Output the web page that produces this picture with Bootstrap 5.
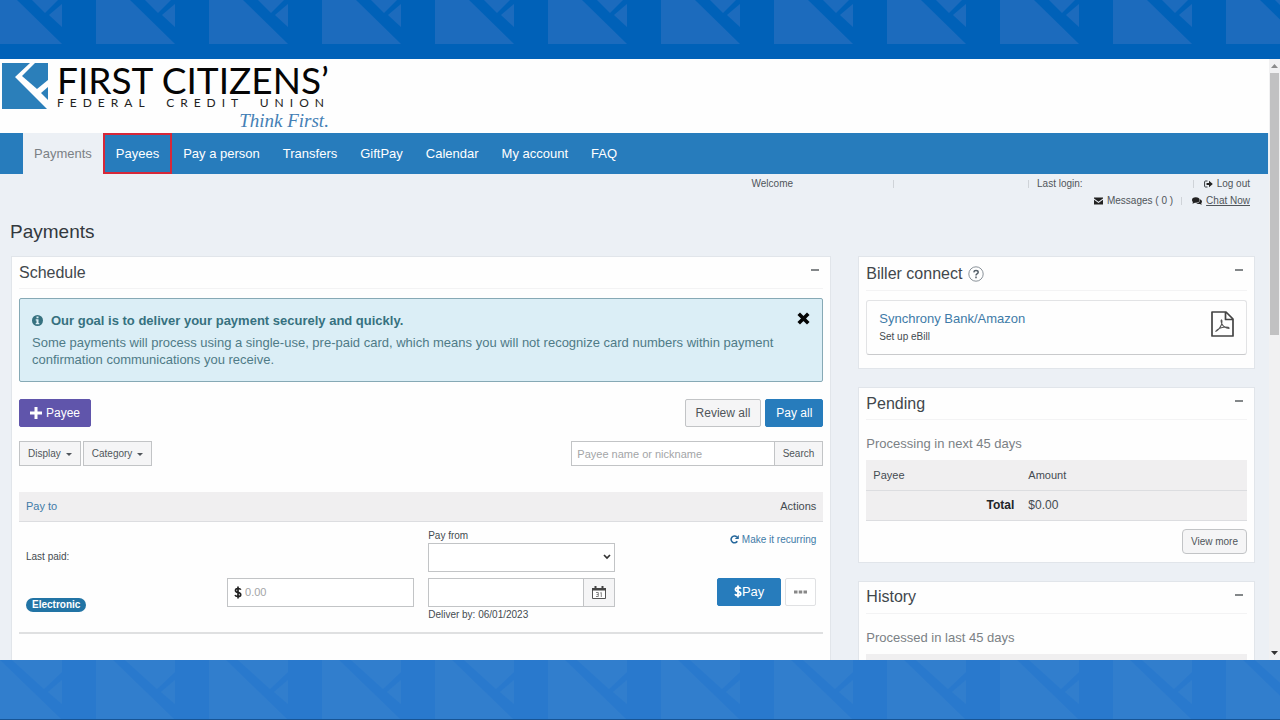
<!DOCTYPE html>
<html lang="en">
<head>
<meta charset="utf-8">
<meta name="viewport" content="width=device-width, initial-scale=1">
<title>Payments - First Citizens' Federal Credit Union</title>
<link href="https://cdn.jsdelivr.net/npm/bootstrap@5.3.0/dist/css/bootstrap.min.css" rel="stylesheet">
<style>
:root{--brand:#277cbc;--ink:#444b50;--line:#c2c4c6;--soft:#f0eff0}
body{font-family:"Liberation Sans",Arial,sans-serif;font-size:11px;line-height:14px;color:var(--ink);background:#0061b8}
a{text-decoration:none;color:#3f7ba8}
svg{display:block;flex:none}
.band-top{height:59px;background:#0061b8}
.band-bottom{height:60px;background:#2979cd;border-bottom:1px solid #175494}
.screen{background:#ecf0f5;min-height:0}
.masthead{background:#fefefe;height:74px;padding:4px 2px 0}
.brand-name{font:37px/34px Lato,sans-serif;color:#050505}
.brand-sub{font:12px/12px Lato,sans-serif;letter-spacing:6px;color:#222;margin-right:-1px}
.brand-tag{font:italic 19px/23px "Liberation Serif",serif;color:#4580b5}
.mainnav{background:var(--brand);height:41px;padding:0 0 0 23px;margin-right:1px}
.mainnav .nav-link{font-size:13px;line-height:41px;padding:0 12px 0 11px;color:#fff;white-space:nowrap}
.mainnav .nav-link.active{background:#ecf0f5;color:#7b8085;padding:0 11px}
.mainnav .marked{outline:2px solid #d62839;outline-offset:-2px;padding:0 13px}
.util{font-size:10px;line-height:17px;padding:1px 19px 0 0;color:#50555a}
.util a{color:#50555a}
.util .rule{width:1px;height:8px;background:#cfd3d8}
.util .tool{gap:4px;margin-left:10px}
.page-title{font-size:19px;line-height:24px;margin:11px 0 12px -1px;color:#33383d}
.content{padding:0 14px 0 11px}
.cols{--bs-gutter-x:27px}
.panel{background:#fefefe;border:1px solid #e1e5ea;padding:0 7px;margin-bottom:18px}
.panel-head{border-bottom:1px solid #f3f3f4;height:32px}
.panel-head h2{font-size:16px;line-height:20px;margin:0;color:#41474c}
.panel-head.tall{height:34px}
.fold{border:0;background:none;padding:0 4px;align-self:flex-start;margin-top:12px}
.fold span{display:block;width:8px;height:2px;background:#838789}
.help{margin-left:6px}
.notice{background:#dbeef6;border:1px solid #86a9b5;border-radius:2px;padding:13px 12px 13px;margin:9px 0 17px;color:#4f7b87;font-size:13px;line-height:17px;min-height:84px}
.notice strong{color:#36717f}
.notice .lead-line{margin-bottom:5px}
.notice .dismiss{border:0;background:none;padding:0}
.ui-btn{font-size:12px;line-height:26px;padding:0 10px;border-radius:2px;border:1px solid var(--line);background:#f5f5f6;color:#50555a;white-space:nowrap}
.ui-btn:hover{background:#eaeaec}
.ui-btn.purple{background:#6055ab;border-color:#6055ab;color:#fff}
.ui-btn.blue{background:var(--brand);border-color:var(--brand);color:#fff}
.ui-btn.slim{font-size:10px;line-height:23px;padding:0 8px;border-radius:0}
.ui-btn.slim::after{margin-left:5px;vertical-align:1px}
.ui-btn.pay{font-size:13px;padding:0 16px}
.ui-btn.more{background:#fff;border-color:#e0e1e3;padding:0 8px}
.filters{margin-top:14px}
.search{width:252px}
.ui-field{font-size:11px;border:1px solid var(--line);border-radius:0;background:#fff;height:29px;padding:0 5px;width:100%;min-width:0;color:var(--ink)}
.ui-field::placeholder{color:#a3a5a7;opacity:1}
.search .ui-field{height:25px;border-right:0}
.schedule{table-layout:fixed;width:100%;margin:26px 0 40px}
.schedule th{font-weight:400;background:var(--soft);height:29px;padding:0 7px;border-bottom:1px solid #dcdde0}
.schedule td{vertical-align:top;padding:6px 7px 10px;font-size:10px;border-bottom:2px solid #dfe0e1}
.schedule td label{line-height:15px}
.drop-paid{padding-top:22px}
.drop-field{padding-top:50px}
.tag{background:#2274a5;color:#fff;border-radius:7px;font-size:10px;line-height:14px;font-weight:700;padding:0 6px;margin-top:34px}
.amount{border:1px solid var(--line);background:#fff;padding-left:6px}
.amount .ui-field{border:0;height:27px;padding-left:3px}
.date{margin:6px 0 1px}
.date .ui-field{border-right:0}
.cal{padding:0 8px;border-radius:0}
.act-row{margin-top:30px}
.recur{gap:3px;line-height:16px}
select.ui-field{appearance:none;background:#fff url("data:image/svg+xml,%3Csvg xmlns='http://www.w3.org/2000/svg' viewBox='0 0 8 6'%3E%3Cpath d='M1 1l3 3 3-3' fill='none' stroke='%23333' stroke-width='1.7'/%3E%3C/svg%3E") no-repeat right 3px center/8px 6px}
.biller{border:1px solid #e2e3e5;border-bottom-color:#c9cacc;border-radius:3px;margin:9px 0 13px;padding:10px 12px 7px}
.biller a{font-size:13px;line-height:16px}
.biller .hint{font-size:10px;line-height:20px}
.sub{font-size:13px;line-height:18px;color:#7b8185;margin:15px 0 7px}
.totals{width:100%;background:var(--soft);table-layout:fixed}
.totals th,.totals td{height:30px;padding:0 7px;border-bottom:1px solid #dcdde0}
.totals .first{width:155px}
.totals thead th{font-weight:400}
.totals tbody{font-size:12px}
.scroller{width:11px;background:#f1f1f2;padding:4px 0}
.thumb{width:9px;height:262px;background:#c1c1c2;margin-left:1px}
</style>
</head>
<body>
<div class="d-flex flex-column vh-100 overflow-hidden">
  <div class="band-top flex-shrink-0" aria-hidden="true">
    <svg width="100%" height="59"><defs><pattern id="pt" x="-17" y="0" width="113" height="59" patternUnits="userSpaceOnUse"><g fill="#1c6bbd"><path d="M0 0H34L79 44H0Z"/><path d="M49 0L62 13L75 0Z"/><path d="M66 15L79 4V27Z"/></g></pattern></defs><rect width="100%" height="59" fill="url(#pt)"/></svg>
  </div>

  <div class="screen d-flex flex-grow-1 overflow-hidden">
    <div class="flex-grow-1">
      <header class="masthead d-flex align-items-start">
        <svg width="47" height="46" viewBox="0 0 47 46"><path fill="#2b7fba" d="M0 0H28L13 14L45 46H0Z"/><path fill="#2b7fba" d="M33 0H46V17L35 26L20 13Z"/><path fill="#2b7fba" d="M46 24V37L39 30Z"/></svg>
        <div class="d-inline-flex flex-column ms-2">
          <span class="brand-name">FIRST CITIZENS’</span>
          <span class="brand-sub d-flex justify-content-between"><span>FEDERAL</span> <span>CREDIT</span> <span>UNION</span></span>
          <span class="brand-tag text-end">Think First.</span>
        </div>
      </header>
      <nav class="mainnav nav flex-nowrap" aria-label="Main">
        <a class="nav-link active" href="#" aria-current="page">Payments</a>
        <a class="nav-link marked" href="#">Payees</a>
        <a class="nav-link" href="#">Pay a person</a>
        <a class="nav-link" href="#">Transfers</a>
        <a class="nav-link" href="#">GiftPay</a>
        <a class="nav-link" href="#">Calendar</a>
        <a class="nav-link" href="#">My account</a>
        <a class="nav-link" href="#">FAQ</a>
      </nav>
      <div class="util">
        <div class="d-flex justify-content-end align-items-center">
          <span style="margin-right:100px">Welcome</span><span class="rule" style="margin-right:134px"></span><span class="rule me-2"></span>
          <span style="margin-right:110px">Last login:</span><span class="rule"></span>
          <a class="tool d-flex align-items-center" href="#"><svg width="9" height="8" viewBox="0 0 9 8"><path d="M3.500 1H1.500Q.6 1 .6 2V6Q.6 7 1.500 7H3.500" fill="none" stroke="#33383c"/><path fill="#222" d="M2.500 2.900H5V.8L8.800 4L5 7.200V5.100H2.500Z"/></svg>Log out</a>
        </div>
        <div class="d-flex justify-content-end align-items-center">
          <a class="d-flex align-items-center gap-1 me-2" href="#"><svg width="9" height="8" viewBox="0 0 9 8"><path fill="#222" d="M0 .5H9V1.500L4.500 4.800L0 1.500ZM0 2.700L4.500 6L9 2.700V7.500H0Z"/></svg>Messages ( 0 )</a>
          <span class="rule"></span>
          <a class="tool d-flex align-items-center" href="#"><svg width="10" height="8" viewBox="0 0 10 8"><ellipse cx="3.800" cy="3" rx="3.800" ry="2.700" fill="#222"/><path fill="#222" d="M1 4.500L.5 6.800L3.500 5.500ZM8 2.200Q10 3 10 4.600Q10 5.500 9.200 6.300L9.800 7.800L7.800 7Q5 7.200 4.200 6.300Q8 6 8 2.200Z"/></svg><span class="text-decoration-underline">Chat Now</span></a>
        </div>
      </div>

      <main class="content">
        <h1 class="page-title">Payments</h1>
        <div class="row cols">
          <div class="col-8">
            <section class="panel">
              <div class="panel-head d-flex justify-content-between align-items-center"><h2>Schedule</h2><button class="fold" type="button" aria-label="Collapse Schedule"><span></span></button></div>
              <div class="notice d-flex align-items-start">
                <div class="flex-grow-1">
                  <div class="lead-line d-flex align-items-center"><svg class="me-2" width="11" height="11" viewBox="0 0 11 11"><circle cx="5.500" cy="5.500" r="5.500" fill="#36717f"/><path fill="#dbeef6" d="M4.500 1.600H6.500V3.300H4.500ZM3.700 4.300H6.500V8H7.300V9.200H3.700V8H4.500V5.400H3.700Z"/></svg><strong>Our goal is to deliver your payment securely and quickly.</strong></div>
                  <div>Some payments will process using a single-use, pre-paid card, which means you will not recognize card numbers within payment confirmation communications you receive.</div>
                </div>
                <button class="dismiss" type="button" aria-label="Dismiss"><svg width="13" height="13" viewBox="0 0 13 13"><path d="M3 3L10 10M10 3L3 10" stroke="#050505" stroke-width="3.600" stroke-linecap="square"/></svg></button>
              </div>
              <div class="d-flex align-items-center gap-1">
                <button class="ui-btn purple d-flex align-items-center me-auto" type="button"><svg width="12" height="12" viewBox="0 0 12 12"><path d="M6 0V12M0 6H12" stroke="#fff" stroke-width="3"/></svg><span class="ms-1">Payee</span></button>
                <button class="ui-btn" type="button">Review all</button>
                <button class="ui-btn blue" type="button">Pay all</button>
              </div>
              <div class="filters d-flex align-items-center">
                <div class="d-flex me-auto" style="gap:2px">
                  <button class="ui-btn slim dropdown-toggle" type="button">Display</button>
                  <button class="ui-btn slim dropdown-toggle" type="button">Category</button>
                </div>
                <form class="search d-flex" onsubmit="return false">
                  <input class="ui-field" type="text" placeholder="Payee name or nickname" aria-label="Payee name or nickname">
                  <button class="ui-btn slim" type="submit">Search</button>
                </form>
              </div>
              <table class="schedule">
                <thead><tr><th><a href="#">Pay to</a></th><th></th><th></th><th class="text-end">Actions</th></tr></thead>
                <tbody><tr>
                  <td><div class="drop-paid d-flex flex-column align-items-start"><span>Last paid:</span><span class="tag">Electronic</span></div></td>
                  <td><div class="drop-field"><div class="amount d-flex align-items-center"><svg width="8" height="13" viewBox="0 0 8 13"><path d="M6.800 3.800Q6.300 2.500 4 2.500Q1.500 2.500 1.500 4.400Q1.500 5.900 4 6.400Q6.700 7 6.700 8.700Q6.700 10.500 4 10.500Q1.500 10.500 1.100 9M4 .5V12.500" fill="none" stroke="#222" stroke-width="1.700"/></svg><input class="ui-field" type="text" placeholder="0.00" aria-label="Amount"></div></div></td>
                  <td><label class="d-block" for="from">Pay from</label>
                    <select class="ui-field d-block" id="from"><option></option></select>
                    <div class="date d-flex"><input class="ui-field" type="text" aria-label="Payment date"><button class="ui-btn cal" type="button" aria-label="Open calendar"><svg width="14" height="13" viewBox="0 0 14 13"><path d="M.5 3H13.500V12.500H.5Z" fill="#fff" stroke="#555"/><path fill="#444" d="M0 2H14V4.500H0ZM2.500 0H4.500V3H2.500ZM9.500 0H11.500V3H9.500Z"/><path d="M4 6.500H6.300V10.500H4M4.600 8.500H6.300M8.300 7L9.300 6.500V11" fill="none" stroke="#777" stroke-width=".9"/></svg></button></div>
                    <span>Deliver by: 06/01/2023</span></td>
                  <td><div class="d-flex flex-column align-items-end pt-1"><a class="recur d-flex align-items-center" href="#"><svg width="9" height="9" viewBox="0 0 9 9"><path d="M7.300 6.300A3.400 3.400 0 1 1 6.800 1.900" fill="none" stroke="#27689c" stroke-width="1.600"/><path fill="#27689c" d="M8.800 0V4H4.800Z"/></svg>Make it recurring</a>
                    <div class="act-row d-flex gap-1"><button class="ui-btn blue pay d-flex align-items-center" type="button"><svg width="8" height="13" viewBox="0 0 8 13"><path d="M6.800 3.800Q6.300 2.500 4 2.500Q1.500 2.500 1.500 4.400Q1.500 5.900 4 6.400Q6.700 7 6.700 8.700Q6.700 10.500 4 10.500Q1.500 10.500 1.100 9M4 .5V12.500" fill="none" stroke="#fff" stroke-width="1.800"/></svg>Pay</button>
                    <button class="ui-btn more" type="button" aria-label="More actions"><svg width="13" height="4" viewBox="0 0 13 4" class="d-inline-block align-middle"><path fill="#888" d="M0 .5H3.500V3.500H0ZM4.750 .5H8.250V3.500H4.750ZM9.500 .5H13V3.500H9.500Z"/></svg></button></div></div></td>
                </tr></tbody>
              </table>
            </section>
          </div>
          <div class="col-4">
            <section class="panel">
              <div class="panel-head tall d-flex align-items-center"><h2>Biller connect</h2>
                <svg class="help me-auto" width="16" height="16" viewBox="0 0 16 16"><circle cx="8" cy="8" r="7.200" fill="none" stroke="#8a9299"/><path d="M5.800 6.300Q6 4.500 8 4.500Q10.200 4.500 10.200 6.200Q10.200 7.200 9 7.900Q8 8.500 8 9.600M8 10.600V12.200" fill="none" stroke="#555f68" stroke-width="1.500"/></svg>
                <button class="fold" type="button" aria-label="Collapse Biller connect"><span></span></button></div>
              <div class="biller d-flex justify-content-between align-items-start">
                <div><a class="d-block" href="#">Synchrony Bank/Amazon</a><div class="hint">Set up eBill</div></div>
                <svg width="23" height="26" viewBox="0 0 23 26"><path d="M1 1H15L22 8V25H1ZM14.500 1V8.500H22" fill="none" stroke="#444" stroke-width="1.700" stroke-linejoin="round"/><path d="M4.500 20.500Q8 19 10.300 14Q11.500 10 10.500 9Q9.500 9.500 11 13Q13 17 18 17.500Q18.500 16 14 16Q8 16.500 4.500 20.500Z" fill="none" stroke="#555" stroke-width="1.100"/></svg>
              </div>
            </section>
            <section class="panel">
              <div class="panel-head d-flex justify-content-between align-items-center"><h2>Pending</h2><button class="fold" type="button" aria-label="Collapse Pending"><span></span></button></div>
              <p class="sub">Processing in next 45 days</p>
              <table class="totals">
                <thead><tr><th class="first">Payee</th><th>Amount</th></tr></thead>
                <tbody><tr><th class="text-end text-dark">Total</th><td>$0.00</td></tr></tbody>
              </table>
              <div class="text-end mt-2 mb-2"><button class="ui-btn slim rounded-1" type="button">View more</button></div>
            </section>
            <section class="panel">
              <div class="panel-head d-flex justify-content-between align-items-center"><h2>History</h2><button class="fold" type="button" aria-label="Collapse History"><span></span></button></div>
              <p class="sub">Processed in last 45 days</p>
              <table class="totals"><thead><tr><th class="first"></th><th></th></tr></thead></table>
            </section>
          </div>
        </div>
      </main>
    </div>
    <div class="scroller d-flex flex-column flex-shrink-0" aria-hidden="true">
      <svg class="mx-auto mb-1" width="7" height="6" viewBox="0 0 7 6"><path fill="#8b8b8b" d="M0 5H7L3.500 1Z"/></svg>
      <div class="thumb mb-auto"></div>
      <svg class="mx-auto" width="7" height="6" viewBox="0 0 7 6"><path fill="#333" d="M0 1H7L3.500 5Z"/></svg>
    </div>
  </div>

  <div class="band-bottom flex-shrink-0" aria-hidden="true">
    <svg width="100%" height="59"><defs><pattern id="pb" x="-17" y="0" width="113" height="59" patternUnits="userSpaceOnUse"><g fill="#317ecd"><path d="M0 0H17L78 59H0Z"/><path d="M29 0H79V12L61 29Z"/><path d="M65 32L79 20V44Z"/></g></pattern></defs><rect width="100%" height="59" fill="url(#pb)"/></svg>
  </div>
</div>
<script src="https://cdn.jsdelivr.net/npm/bootstrap@5.3.0/dist/js/bootstrap.bundle.min.js"></script>
</body>
</html>
